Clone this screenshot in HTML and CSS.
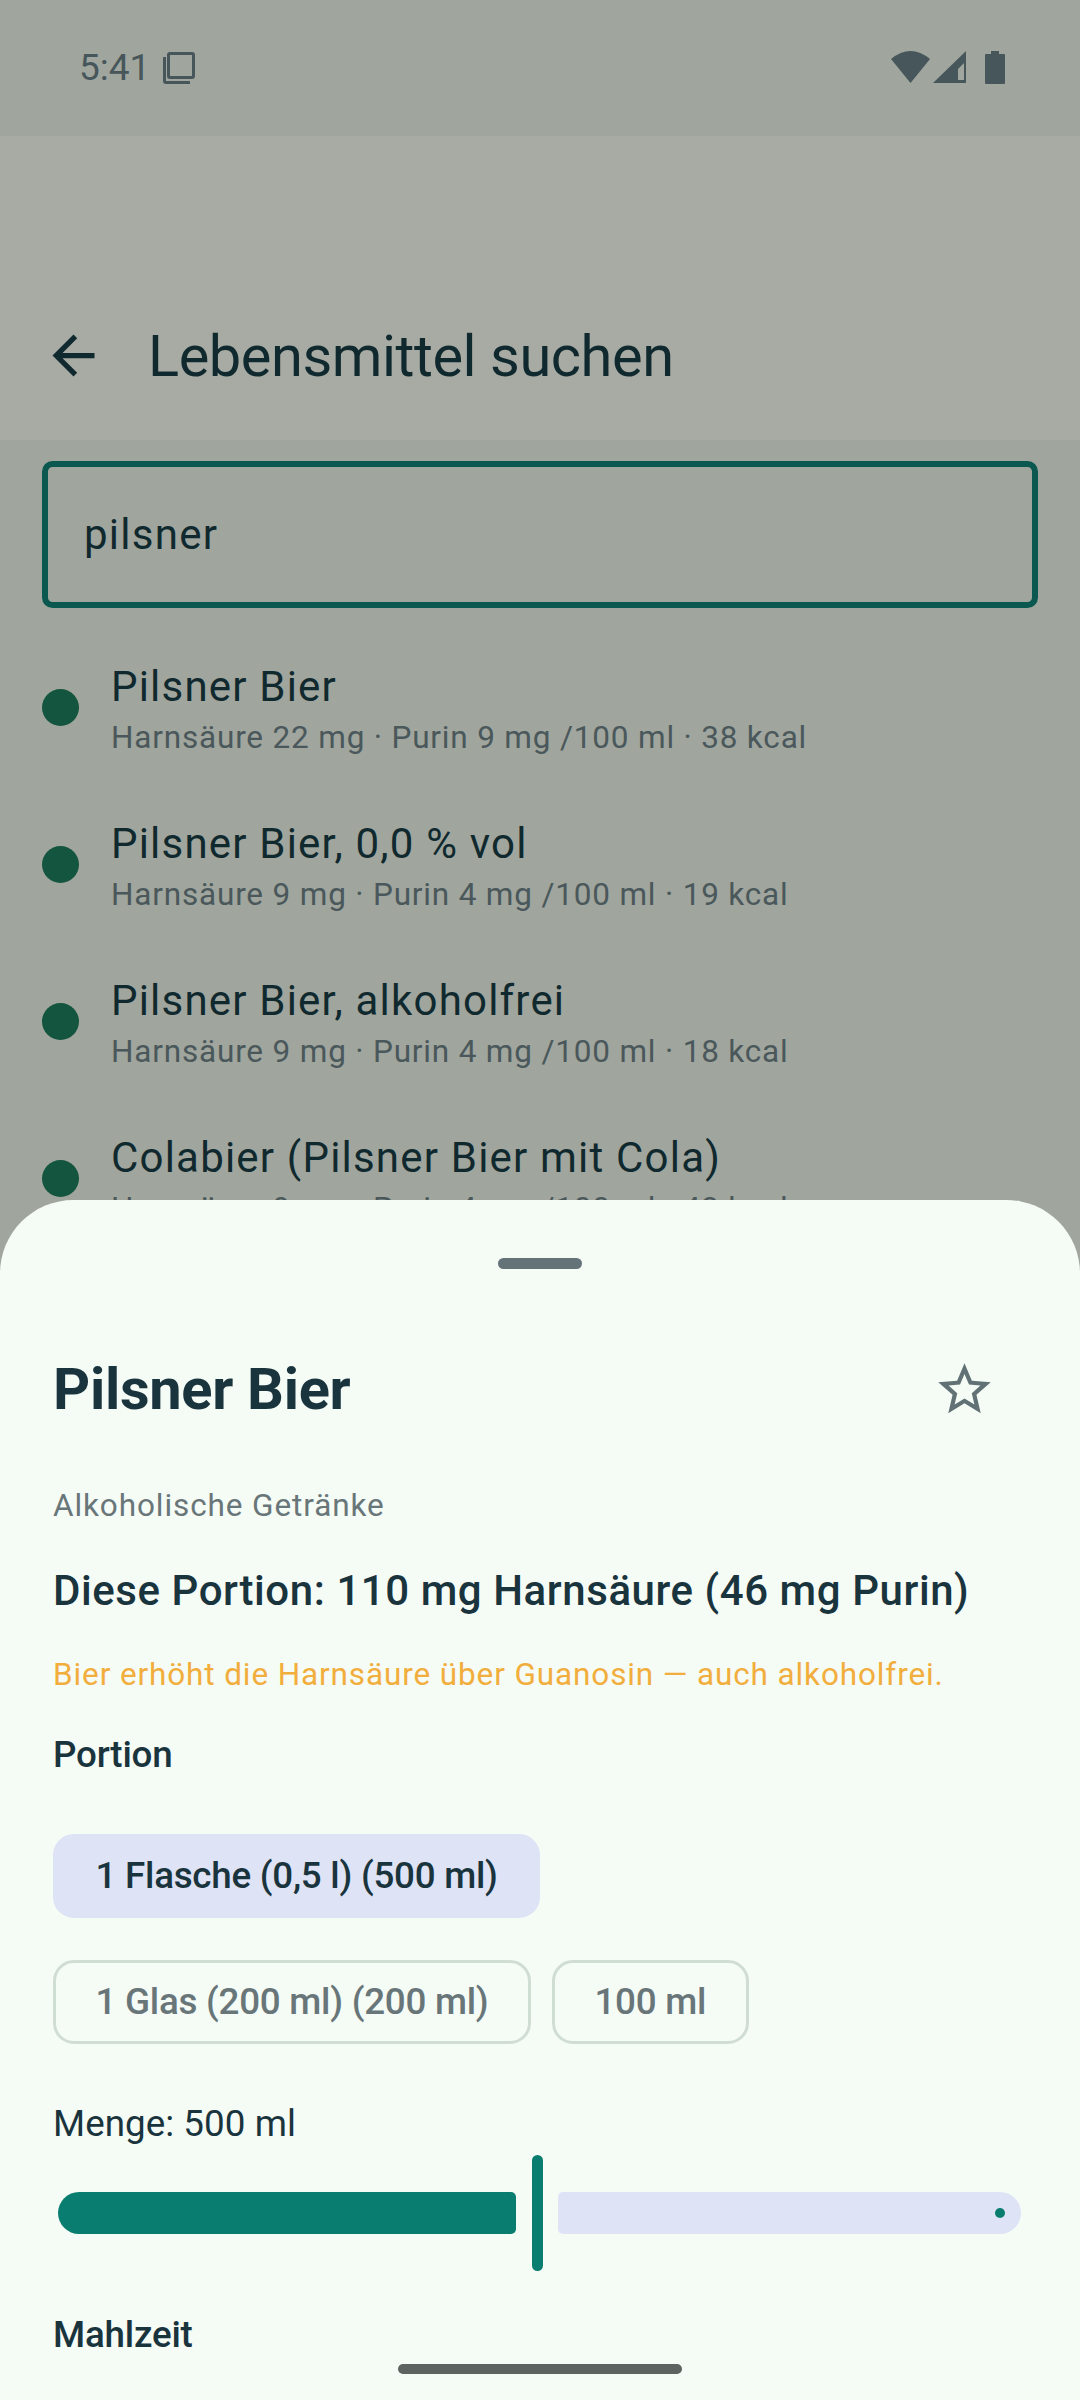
FILE: index.html
```html
<!DOCTYPE html>
<html lang="de">
<head>
<meta charset="utf-8">
<title>Lebensmittel suchen</title>
<link rel="stylesheet" href="styles.css">
</head>
<body>
<div class="screen">
  <div class="status">
    <span class="time">5:41</span>
    <svg class="ic-copy" width="34" height="34" viewBox="0 0 34 34"><path d="M8 2h22a3 3 0 0 1 3 3v21a3 3 0 0 1-3 3H8a3 3 0 0 1-3-3V5a3 3 0 0 1 3-3zM8 5v21h22V5zM1 7h3v24h24v3H4a3 3 0 0 1-3-3z" fill="#46565a" fill-rule="evenodd"/></svg>
    <span class="grow"></span>
    <svg class="ic-status" width="115" height="34" viewBox="0 0 115 34"><path d="M0 9Q19.500-7 39 9L19.500 33z" fill="#46565a"/><path d="M42 33L75 1V33z" fill="#46565a"/><path d="M67 19L73 13V30H67z" fill="#a0a59d"/><path d="M100 1h8v3h5a1 1 0 0 1 1 1v28a1 1 0 0 1-1 1H95a1 1 0 0 1-1-1V5a1 1 0 0 1 1-1h5z" fill="#46565a"/></svg>
  </div>
  <header class="appbar">
    <svg class="ic-back" width="63" height="63" viewBox="0 0 24 24"><path d="M20 11H7.830l5.590-5.590L12 4l-8 8 8 8 1.410-1.410L7.830 13H20v-2z" fill="#10292e"/></svg>
    <h1 class="appbar-title">Lebensmittel suchen</h1>
  </header>
  <div class="search">pilsner</div>
  <ul class="results">
    <li class="row"><span class="dot"></span><div><div class="row-title">Pilsner Bier</div><div class="row-sub">Harnsäure 22 mg · Purin 9 mg /100 ml · 38 kcal</div></div></li>
    <li class="row"><span class="dot"></span><div><div class="row-title">Pilsner Bier, 0,0 % vol</div><div class="row-sub">Harnsäure 9 mg · Purin 4 mg /100 ml · 19 kcal</div></div></li>
    <li class="row"><span class="dot"></span><div><div class="row-title">Pilsner Bier, alkoholfrei</div><div class="row-sub">Harnsäure 9 mg · Purin 4 mg /100 ml · 18 kcal</div></div></li>
    <li class="row"><span class="dot"></span><div><div class="row-title">Colabier (Pilsner Bier mit Cola)</div><div class="row-sub">Harnsäure 9 mg · Purin 4 mg /100 ml · 43 kcal</div></div></li>
  </ul>

  <section class="sheet">
    <div class="handle"></div>
    <div class="sheet-head">
      <h2 class="food-name">Pilsner Bier</h2>
      <svg class="ic-star" width="63" height="63" viewBox="0 0 24 24"><path d="M22 9.240l-7.190-.62L12 2 9.190 8.630 2 9.240l5.460 4.730L5.820 21 12 17.270 18.180 21l-1.630-7.030L22 9.240zM12 15.400l-3.760 2.270 1-4.280-3.320-2.880 4.380-.38L12 6.100l1.710 4.040 4.380.38-3.320 2.880 1 4.280L12 15.400z" fill="#617175"/></svg>
    </div>
    <p class="category">Alkoholische Getränke</p>
    <p class="portion-total">Diese Portion: 110 mg Harnsäure (46 mg Purin)</p>
    <p class="warning">Bier erhöht die Harnsäure über Guanosin — auch alkoholfrei.</p>
    <p class="label label-portion">Portion</p>
    <div class="chips">
      <span class="chip chip-on">1 Flasche (0,5 l) (500 ml)</span>
      <span class="chip">1 Glas (200 ml) (200 ml)</span>
      <span class="chip">100 ml</span>
    </div>
    <p class="amount">Menge: 500 ml</p>
    <div class="slider">
      <div class="track track-on"></div>
      <div class="thumb"></div>
      <div class="track track-off"><span class="stop"></span></div>
    </div>
    <p class="label label-meal">Mahlzeit</p>
  </section>
  <div class="nav-pill"></div>
</div>
</body>
</html>
```
FILE: styles.css
```css
* { box-sizing: border-box; }
html, body { margin: 0; padding: 0; }
body { width: 1080px; height: 2400px; overflow: hidden; background: #a0a59d; font-family: Roboto, "Liberation Sans", sans-serif; color: #10292e; }
h1, h2, p, ul { margin: 0; padding: 0; font-weight: 400; }
ul { list-style: none; }
.screen { position: relative; width: 1080px; height: 2400px; overflow: hidden; background: #a0a59d; }

.status { height: 136px; display: flex; align-items: flex-start; padding: 0 74px 0 79px; color: #46565a; }
.time { font-size: 37px; line-height: 48px; margin-top: 44px; }
.ic-copy { margin: 50px 0 0 12px; }
.grow { flex: 1; }
.ic-status { margin-top: 50px; }

.appbar { height: 304px; background: #a8aba4; display: flex; align-items: center; padding: 135px 0 0 42px; }
.ic-back { flex: none; }
.appbar-title { font-size: 57.75px; line-height: 76px; margin-left: 43px; letter-spacing: -.45px; color: #10292e; }

.search { margin: 21px 42px 0; height: 147px; border: 6px solid #0b5850; border-radius: 10.5px; padding: 0 36px; font-size: 42px; line-height: 135px; letter-spacing: 1.25px; color: #10292e; }

.results { margin: 50px 42px 0; display: flex; flex-direction: column; gap: 55px; }
.row { display: flex; align-items: center; gap: 32px; height: 102px; }
.dot { width: 37px; height: 37px; border-radius: 50%; background: #13553e; margin-bottom: 4px; flex: none; }
.row-title { font-size: 42px; line-height: 58px; letter-spacing: 1.2px; color: #10292e; }
.row-sub { font-size: 31.5px; line-height: 44px; letter-spacing: .82px; color: #4a585b; }

.sheet { position: absolute; left: 0; right: 0; top: 1200px; height: 1200px; background: #f5fbf5; border-radius: 73.5px 73.5px 0 0; padding: 0 53px; overflow: hidden; }
.handle { width: 84px; height: 11px; margin: 58px auto 0; border-radius: 5.5px; background: #647378; }
.sheet-head { display: flex; align-items: center; justify-content: space-between; margin-top: 82px; padding-right: 31px; height: 76px; }
.food-name { font-size: 57.75px; line-height: 76px; font-weight: 700; letter-spacing: -.3px; color: #1a343e; }
.category { margin-top: 57.5px; font-size: 31.5px; line-height: 42px; letter-spacing: .9px; color: #697679; }
.portion-total { margin-top: 38.5px; font-size: 42px; line-height: 52px; font-weight: 500; letter-spacing: .57px; color: #1a343e; }
.warning { margin-top: 36.5px; font-size: 31.5px; line-height: 42px; letter-spacing: .88px; color: #f2ae3d; }
.label { font-size: 36.75px; line-height: 48px; font-weight: 500; letter-spacing: -.2px; color: #1a343e; }
.label-portion { margin-top: 35.5px; }
.chips { margin-top: 55px; display: flex; flex-wrap: wrap; gap: 42px 21px; }
.chip { height: 84px; padding: 0 39.5px; border: 3px solid #d0ddd3; border-radius: 21px; font-size: 36.75px; line-height: 78px; font-weight: 500; letter-spacing: -.25px; color: #687679; }
.chip-on { background: #dee3f6; border-color: #dee3f6; color: #1a343e; }
.amount { margin-top: 56px; font-size: 36.75px; line-height: 48px; letter-spacing: .05px; color: #1a343e; }
.slider { margin-top: 7px; height: 116px; display: flex; align-items: center; padding: 0 5px; }
.track { height: 42px; display: flex; align-items: center; justify-content: flex-end; }
.track-on { flex: 0 0 458px; background: #097e70; border-radius: 21px 5px 5px 21px; }
.track-off { flex: 0 0 463px; background: #dee3f6; border-radius: 5px 21px 21px 5px; padding-right: 16px; }
.thumb { flex: 0 0 11px; height: 116px; margin: 0 15px 0 16px; background: #097e70; border-radius: 5.5px; }
.stop { width: 10.5px; height: 10.5px; border-radius: 50%; background: #097e70; }
.label-meal { margin-top: 39.5px; }
.nav-pill { position: absolute; left: 398px; top: 2364px; width: 284px; height: 10px; border-radius: 5px; background: #5c6361; }
```
